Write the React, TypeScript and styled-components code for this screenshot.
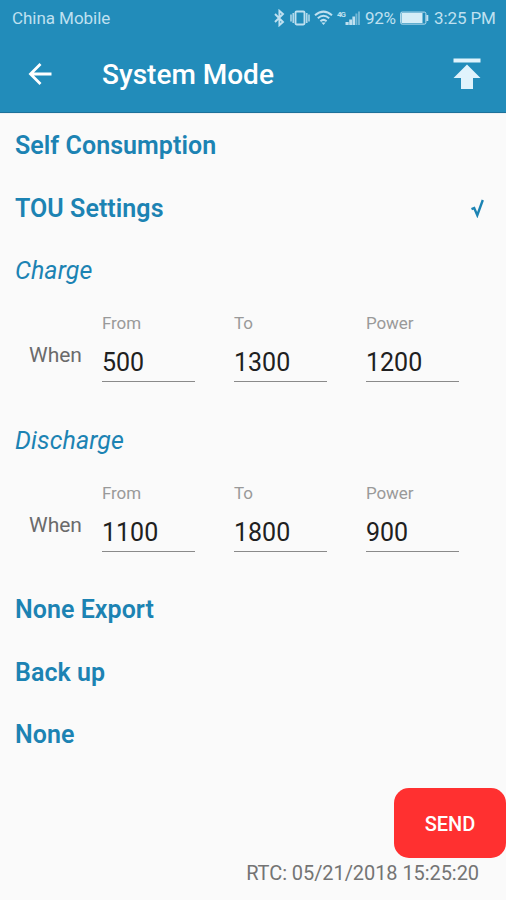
import React from "react";
import styled, { createGlobalStyle } from "styled-components";

const GlobalStyle = createGlobalStyle`
  *, *::before, *::after { box-sizing: border-box; }
  body { margin: 0; background: #fafafa; font-family: Roboto, sans-serif; }
`;

const Screen = styled.div`
  display: flex;
  flex-direction: column;
  width: 506px;
  height: 900px;
  overflow: hidden;
  background: #fafafa;
`;

const Header = styled.header`
  flex: none;
  height: 114px;
  background: linear-gradient(#228cba 0 112px, #1d719a 112px 113px, #eef1f3 113px);
`;

const StatusBar = styled.div`
  display: flex;
  align-items: center;
  height: 36px;
  padding: 0 11px 0 12px;
  color: #bfe0f0;
`;

const Carrier = styled.span`
  flex: 1;
  font-size: 17px;
  line-height: 20px;
  letter-spacing: -0.05px;
`;

const StatusIcon = styled.svg<{ $gap: number }>`
  display: block;
  flex: none;
  margin-right: ${(p) => p.$gap}px;
`;

const StatusText = styled.span<{ $width: number; $gap?: number; $spacing?: number }>`
  width: ${(p) => p.$width}px;
  margin-right: ${(p) => p.$gap ?? 0}px;
  font-size: 17px;
  line-height: 20px;
  letter-spacing: ${(p) => p.$spacing ?? 0}px;
  white-space: nowrap;
`;

const TitleBar = styled.div`
  display: flex;
  align-items: center;
  height: 76px;
  padding: 0 25px 0 28px;
`;

const IconButton = styled.button`
  display: flex;
  padding: 0;
  border: 0;
  background: none;
`;

const Title = styled.h1`
  flex: 1;
  margin: 2px 0 0 49px;
  color: #fff;
  font-size: 28px;
  font-weight: 500;
  line-height: 34px;
`;

const Content = styled.main`
  flex: none;
`;

const ModeRow = styled.div`
  display: flex;
  align-items: center;
  justify-content: space-between;
  height: 62.4px;
  padding: 1px 22px 0 15px;
  color: #1c83b3;
`;

const ModeName = styled.span`
  font-size: 25px;
  font-weight: 600;
  letter-spacing: 0.05px;
`;

const PeriodName = styled.span`
  font-size: 25px;
  font-style: italic;
  letter-spacing: 0.1px;
`;

const Schedule = styled.div`
  display: flex;
  height: 107.3px;
  padding: 12px 0 0 29px;
`;

const When = styled.span`
  width: 73px;
  padding-top: 29px;
  color: #6b6b6b;
  font-size: 21px;
  line-height: 26px;
`;

const Fields = styled.div`
  display: grid;
  grid-template-columns: repeat(3, 93px);
  column-gap: 39px;
`;

const Field = styled.label`
  display: flex;
  flex-direction: column;
  height: 69px;
  border-bottom: 1.5px solid #8a8a8a;
`;

const FieldLabel = styled.span`
  color: #999;
  font-size: 17px;
  line-height: 20px;
  letter-spacing: -0.1px;
`;

const FieldValue = styled.span`
  margin-top: 15px;
  color: #202020;
  font-size: 25px;
  line-height: 30px;
`;

const Footer = styled.footer`
  display: flex;
  flex-direction: column;
  align-items: flex-end;
  margin-top: auto;
  height: 112px;
`;

const SendButton = styled.button`
  width: 112px;
  height: 70px;
  padding: 2px 0 0;
  border: 0;
  border-radius: 15px;
  background: #ff3030;
  color: #fff;
  font-family: inherit;
  font-size: 20px;
  font-weight: 500;
`;

const Clock = styled.div`
  margin: 2px 27px 0 0;
  color: #747474;
  font-size: 20px;
  line-height: 26px;
  letter-spacing: -0.07px;
`;

const BluetoothIcon = () => (
  <StatusIcon $gap={5} width="11" height="18" viewBox="0 0 11 18" fill="none" stroke="currentColor" strokeWidth="1.9">
    <path d="M1 5l8 8-3.6 3.2V1.800L9 5l-8 8" />
  </StatusIcon>
);

const VibrateIcon = () => (
  <StatusIcon $gap={4} width="20" height="18" viewBox="0 0 20 18" fill="none" stroke="currentColor" strokeWidth="1.9">
    <rect x="5.5" y="2.500" width="9" height="13" rx="1.2" />
    <path d="M1 5.500v7M3.200 4v10M16.800 4v10M19 5.500v7" strokeWidth="1.4" />
  </StatusIcon>
);

const WifiIcon = () => (
  <StatusIcon $gap={4} width="19" height="18" viewBox="0 0 19 18" fill="none" stroke="currentColor" strokeWidth="2">
    <path d="M1 6.2Q9.5-1 18 6.2M3.8 9.2q5.7-4.8 11.4 0M6.4 12.2q3.1-2.6 6.2 0" />
    <path d="M7.3 13.6h4.4L9.5 16z" fill="currentColor" stroke="none" />
  </StatusIcon>
);

const SignalIcon = () => (
  <StatusIcon $gap={4} width="24" height="18" viewBox="0 0 24 18" fill="currentColor">
    <text x="0" y="7.8" fontFamily="Roboto, sans-serif" fontSize="8" fontWeight="700" textLength="9">4G</text>
    <path d="M8.500 13h3.200v3H8.500zM12.2 10.5h2.8V16h-2.8zM15.4 7.5H18V16h-2.6z" />
    <path d="M18.4 4.5h2V16h-2zM21 2.5h2V16h-2z" opacity=".5" />
  </StatusIcon>
);

const BatteryIcon = () => (
  <StatusIcon $gap={5} width="29" height="14" viewBox="0 0 29 14" fill="none" stroke="currentColor">
    <rect x=".6" y="1.1" width="25.3" height="12" rx="1.5" strokeWidth="1" />
    <path d="M1.500 2h21v10h-21z" fill="#d5edf7" stroke="none" />
    <path d="M27.3 4v6" strokeWidth="2" />
  </StatusIcon>
);

const schedules = {
  charge: [["From", "500"], ["To", "1300"], ["Power", "1200"]],
  discharge: [["From", "1100"], ["To", "1800"], ["Power", "900"]],
};

const Mode = ({ name, selected = false }: { name: string; selected?: boolean }) => (
  <ModeRow>
    <ModeName>{name}</ModeName>
    {selected && (
      <svg width="13" height="19" viewBox="0 0 13 19" fill="none" stroke="currentColor" strokeWidth="2.4">
        <path d="M.5 10.2L3.2 9l3.1 7.2L11.8 1" />
      </svg>
    )}
  </ModeRow>
);

const Period = ({ name, fields }: { name: string; fields: string[][] }) => (
  <section>
    <ModeRow><PeriodName>{name}</PeriodName></ModeRow>
    <Schedule>
      <When>When</When>
      <Fields>
        {fields.map(([label, value]) => (
          <Field key={label}>
            <FieldLabel>{label}</FieldLabel>
            <FieldValue>{value}</FieldValue>
          </Field>
        ))}
      </Fields>
    </Schedule>
  </section>
);

export default function App() {
  return (
    <Screen>
      <GlobalStyle />
      <Header>
        <StatusBar>
          <Carrier>China Mobile</Carrier>
          <BluetoothIcon />
          <VibrateIcon />
          <WifiIcon />
          <SignalIcon />
          <StatusText $width={31} $gap={4} $spacing={-0.3}>92%</StatusText>
          <BatteryIcon />
          <StatusText $width={61} $spacing={-0.1}>3:25 PM</StatusText>
        </StatusBar>
        <TitleBar>
          <IconButton aria-label="Back">
            <svg width="25" height="24" viewBox="0 0 25 24" fill="none" stroke="#fff" strokeWidth="2.8">
              <path d="M23.500 12H3M12.500 2L2.5 12l10 10" />
            </svg>
          </IconButton>
          <Title>System Mode</Title>
          <IconButton aria-label="Upload">
            <svg width="28" height="32" viewBox="0 0 28 32" fill="#e0f3fc">
              <path d="M.5 .500h27v4H.5zM14 6.500L27.500 20H20V31H8V20H.5z" />
            </svg>
          </IconButton>
        </TitleBar>
      </Header>
      <Content>
        <Mode name="Self Consumption" />
        <Mode name="TOU Settings" selected />
        <Period name="Charge" fields={schedules.charge} />
        <Period name="Discharge" fields={schedules.discharge} />
        <Mode name="None Export" />
        <Mode name="Back up" />
        <Mode name="None" />
      </Content>
      <Footer>
        <SendButton>SEND</SendButton>
        <Clock>RTC: 05/21/2018 15:25:20</Clock>
      </Footer>
    </Screen>
  );
}
